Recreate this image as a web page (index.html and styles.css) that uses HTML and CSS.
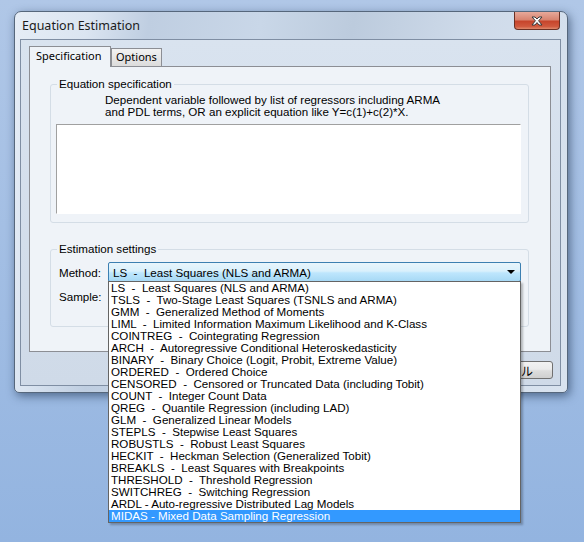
FILE: index.html
```html
<!DOCTYPE html>
<html>
<head>
<title>Equation Estimation</title>
<meta charset="utf-8">
<link rel="stylesheet" href="styles.css">
</head>
<body>
<div class="window">
  <div class="titlebar">
    <span class="title">Equation Estimation</span>
    <span class="close">
      <svg width="12" height="10" viewBox="0 0 12 10"><path d="M1 1 L4 1 L6 3 L8 1 L11 1 L7.6 4.8 L11 9 L8 9 L6 6.6 L4 9 L1 9 L4.4 4.8 Z" fill="#fff" stroke="#3a3a3a" stroke-width="1" stroke-linejoin="round"/></svg>
    </span>
  </div>
  <div class="client">
    <div class="tabs">
      <div class="tab active">Specification</div>
      <div class="tab">Options</div>
    </div>
    <div class="page">
      <fieldset class="group spec">
        <legend>Equation specification</legend>
        <p class="hint">Dependent variable followed by list of regressors including ARMA<br>and PDL terms, OR an explicit equation like Y=c(1)+c(2)*X.</p>
        <textarea class="eq"></textarea>
      </fieldset>
      <fieldset class="group settings">
        <legend>Estimation settings</legend>
        <div class="row">
          <label class="lbl">Method:</label>
          <div class="combo">
            <span class="value">LS  -  Least Squares (NLS and ARMA)</span>
            <span class="arrow"></span>
            <ul class="droplist">
              <li>LS  -  Least Squares (NLS and ARMA)</li>
              <li>TSLS  -  Two-Stage Least Squares (TSNLS and ARMA)</li>
              <li>GMM  -  Generalized Method of Moments</li>
              <li>LIML  -  Limited Information Maximum Likelihood and K-Class</li>
              <li>COINTREG  -  Cointegrating Regression</li>
              <li>ARCH  -  Autoregressive Conditional Heteroskedasticity</li>
              <li>BINARY  -  Binary Choice (Logit, Probit, Extreme Value)</li>
              <li>ORDERED  -  Ordered Choice</li>
              <li>CENSORED  -  Censored or Truncated Data (including Tobit)</li>
              <li>COUNT  -  Integer Count Data</li>
              <li>QREG  -  Quantile Regression (including LAD)</li>
              <li>GLM  -  Generalized Linear Models</li>
              <li>STEPLS  -  Stepwise Least Squares</li>
              <li>ROBUSTLS  -  Robust Least Squares</li>
              <li>HECKIT  -  Heckman Selection (Generalized Tobit)</li>
              <li>BREAKLS  -  Least Squares with Breakpoints</li>
              <li>THRESHOLD  -  Threshold Regression</li>
              <li>SWITCHREG  -  Switching Regression</li>
              <li>ARDL - Auto-regressive Distributed Lag Models</li>
              <li class="sel">MIDAS - Mixed Data Sampling Regression</li>
            </ul>
          </div>
        </div>
        <div class="row">
          <label class="lbl">Sample:</label>
          <div class="sample"></div>
        </div>
      </fieldset>
    </div>
    <div class="buttons">
      <button class="btn">キャンセル</button>
    </div>
  </div>
</div>
</body>
</html>
```
FILE: styles.css
```css
html, body {
    margin: 0;
    height: 100%;
}
body {
    background: linear-gradient(to bottom, #b0c7e7, #93b4e0);
    overflow: hidden;
    font-family: "Liberation Sans", "Noto Sans CJK JP", sans-serif;
    font-size: 11.6px;
    color: #000;
}
.window {
    box-sizing: border-box;
    width: 554px;
    height: 382px;
    margin: 11px 0 0 14px;
    border: 1px solid #56677c;
    border-radius: 7px 7px 5px 5px;
    background: linear-gradient(100deg, #e6edf6 0%, #dbe5f1 12%, #bfcee1 22%, #c9d7e8 40%, #bccbdd 55%, #cfdbea 75%, #d9e3ef 100%);
    box-shadow: 2px 3px 10px rgba(20, 40, 70, 0.55);
    display: flex;
    flex-direction: column;
    padding: 0 6px 6px 5px;
}
.titlebar {
    height: 27px;
    display: flex;
    align-items: flex-start;
}
.title {
    font-family: "Noto Sans", sans-serif;
    font-size: 12.5px;
    color: #1b1b1b;
    margin: 5px 0 0 2px;
}
.close {
    margin-left: auto;
    margin-right: 1px;
    width: 46px;
    height: 18px;
    box-sizing: border-box;
    border: 1px solid #6a3024;
    border-top: none;
    border-radius: 0 0 4px 4px;
    background: linear-gradient(to bottom, #e7a99a 0%, #d88470 45%, #c7452c 55%, #d0593e 85%, #e08a6d 100%);
    display: flex;
    align-items: center;
    justify-content: center;
}
.client {
    flex: 1;
    border: 1px solid #7f8ea3;
    background: linear-gradient(to bottom, #d9e3ef, #cfdae8);
    display: flex;
    flex-direction: column;
}
.tabs {
    height: 26px;
    display: flex;
    align-items: flex-end;
    padding-left: 8px;
}
.tab {
    box-sizing: border-box;
    font-family: "Noto Sans", sans-serif;
    font-size: 11px;
    height: 18px;
    line-height: 16px;
    padding: 0 4px;
    border: 1px solid #8c8e94;
    border-bottom: none;
    background: linear-gradient(to bottom, #f2f2f2, #dcdcdc);
}
.tab.active {
    height: 21px;
    line-height: 18px;
    width: 82px;
    padding: 0 6px;
    margin-bottom: -1px;
    background: #eff3f8;
    position: relative;
    z-index: 1;
}
.page {
    box-sizing: border-box;
    height: 286px;
    margin: 0 9px 0 8px;
    border: 1px solid #8c8e94;
    background: #eff3f8;
}
.group {
    margin: 0 21px 0 20px;
    padding: 0 0 8px 0;
    border: 1px solid #d4dde6;
    border-radius: 3px;
}
.group legend {
    line-height: 12px;
    padding: 0 2px;
    margin-left: 6px;
}
.spec {
    margin-top: 11px;
}
.hint {
    margin: 4px 0 0 54px;
    line-height: 12px;
}
.eq {
    display: block;
    box-sizing: border-box;
    width: 465px;
    height: 90px;
    margin: 6px 0 0 5px;
    border: 1px solid #ffffff;
    border-top-color: #a0a0a0;
    border-left-color: #a0a0a0;
    background: #fff;
    resize: none;
}
.settings {
    margin-top: 20px;
    padding-bottom: 20px;
}
.row {
    display: flex;
    align-items: center;
    margin-top: 7px;
}
.row + .row {
    margin-top: 4px;
}
.lbl {
    width: 49px;
    margin-left: 8px;
}
.combo {
    position: relative;
    box-sizing: border-box;
    width: 413px;
    height: 20px;
    border: 1px solid #3c7fb1;
    border-radius: 2px;
    background: linear-gradient(to bottom, #e8f5fc 0%, #d9f0fc 45%, #bee6fd 55%, #a7d9f5 100%);
    display: flex;
    align-items: center;
}
.value {
    white-space: pre;
    padding-left: 4px;
}
.arrow {
    margin-left: auto;
    margin-right: 5px;
    width: 0;
    height: 0;
    border-left: 4px solid transparent;
    border-right: 4px solid transparent;
    border-top: 4px solid #000;
}
.droplist {
    position: absolute;
    top: 100%;
    left: -1px;
    width: 413px;
    box-sizing: border-box;
    margin: 0;
    padding: 0;
    list-style: none;
    background: #fff;
    border: 1px solid #646464;
    box-shadow: 2px 2px 2px rgba(0, 0, 0, 0.25);
    z-index: 5;
}
.droplist li {
    height: 12px;
    line-height: 12px;
    padding-left: 2px;
    white-space: pre;
}
.droplist .sel {
    background: #3399ff;
    color: #fff;
}
.sample {
    box-sizing: border-box;
    width: 413px;
    height: 20px;
    border: 1px solid #abadb3;
    background: #fff;
}
.buttons {
    display: flex;
    justify-content: flex-end;
    margin-top: 9px;
    padding-right: 7px;
}
.btn {
    box-sizing: border-box;
    width: 100px;
    height: 18px;
    font-family: "Liberation Sans", "Noto Sans CJK JP", sans-serif;
    font-size: 12px;
    border: 1px solid #707070;
    border-radius: 3px;
    background: linear-gradient(to bottom, #f2f2f2 0%, #ebebeb 45%, #dddddd 55%, #cfcfcf 100%);
    padding: 0;
}
```
